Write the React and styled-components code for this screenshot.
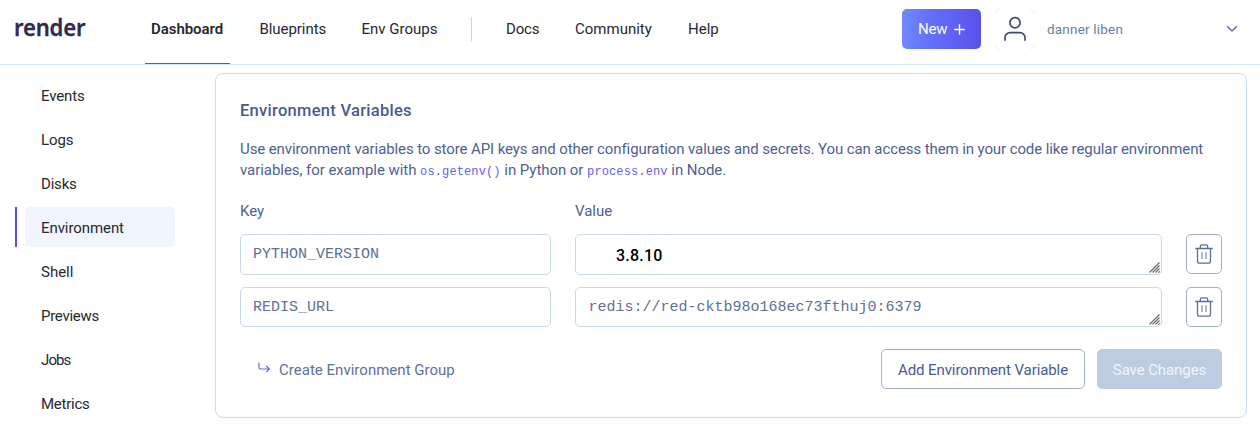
import React from "react";
import styled, { createGlobalStyle } from "styled-components";

const GlobalStyle = createGlobalStyle`
  *, *::before, *::after { box-sizing: border-box; }
  body { margin: 0; background: #fff; overflow: hidden; }
  button, input, textarea { font: inherit; }
  svg { flex-shrink: 0; }
`;

const Page = styled.div`
  height: 433px;
  font-family: Roboto, "Liberation Sans", sans-serif;
  font-size: 15px;
  line-height: 20px;
  color: #27272f;
`;

const Header = styled.header`
  display: flex;
  height: 65px;
  padding: 0 22px 0 14px;
  border-bottom: 1px solid #d7e3fa;
`;

const Logo = styled.a`
  width: 131px;
  padding-top: 10px;
  font-family: "Noto Sans", sans-serif;
  font-size: 24px;
  font-weight: 600;
  line-height: 34px;
  letter-spacing: -0.2px;
  color: #322b4d;
  -webkit-text-stroke: 0.3px #322b4d;
  transform: scaleX(0.92);
  transform-origin: 0 0;
`;

const Nav = styled.nav`
  display: flex;
  align-items: stretch;
  flex: 1;
`;

const NavItem = styled.a`
  width: ${(p) => p.$width}px;
  margin-left: ${(p) => p.$offset || 0}px;
  padding: 19px 0 0 6px;
  font-weight: ${(p) => (p.$active ? 600 : 400)};
  letter-spacing: ${(p) => p.$spacing || 0}px;
  white-space: nowrap;
  border-bottom: 1px solid ${(p) => (p.$active ? "#5850e6" : "transparent")};
`;

const NavDivider = styled.span`
  width: 1px;
  height: 24px;
  margin: 17px 28px 0 0;
  background: #c8d5e8;
`;

const NewButton = styled.button`
  display: flex;
  align-items: center;
  gap: 7px;
  width: 79px;
  height: 40px;
  margin-top: 9px;
  padding: 0 15px 0 16px;
  border: 0;
  border-radius: 5px;
  letter-spacing: -0.25px;
  color: #fff;
  background: linear-gradient(90deg, #7089ff 0%, #6470fa 35%, #5b50e9 100%);
`;

const Account = styled.div`
  display: flex;
  align-items: center;
  width: 243px;
  height: 40px;
  margin: 9px 0 0 14px;
`;

const Avatar = styled.span`
  display: block;
  width: 40px;
  height: 40px;
  margin-right: 12px;
`;

const UserName = styled.span`
  flex: 1;
  font-size: 13.5px;
  letter-spacing: 0.2px;
  color: #6b7aa6;
`;

const Body = styled.div`
  display: flex;
  align-items: flex-start;
`;

const Sidebar = styled.nav`
  display: flex;
  flex-direction: column;
  gap: 4px;
  width: 215px;
  padding: 10px 40px 0 15px;
`;

const SideItem = styled.a`
  display: flex;
  height: 40px;
  padding-left: 8px;
  border-left: 2px solid ${(p) => (p.$active ? "#5b50e9" : "transparent")};
`;

const SideLabel = styled.span`
  flex: 1;
  padding: 11px 16px;
  border-radius: 5px;
  letter-spacing: ${(p) => p.$spacing}px;
  background: ${(p) => (p.$active ? "#f1f5ff" : "transparent")};
`;

const Card = styled.main`
  width: 1032px;
  height: 345px;
  margin-top: 8px;
  padding: 26px 24px 0;
  border: 1px solid #cfdbee;
  border-radius: 8px;
  color: #4f5f91;
`;

const Title = styled.h1`
  margin: 0 0 17px;
  font-size: 16.5px;
  font-weight: 500;
  line-height: 22px;
  letter-spacing: 0.28px;
  color: #4a5b90;
`;

const Description = styled.p`
  margin: 0;
  line-height: 21px;
  white-space: nowrap;
`;

const Line = styled.span`
  display: block;
  height: 21px;
  letter-spacing: ${(p) => p.$spacing || 0}px;
`;

const Code = styled.code`
  font-family: "Liberation Mono", monospace;
  font-size: 12px;
  line-height: 1;
  letter-spacing: 0.12px;
  color: #5f62f4;
`;

const Row = styled.div`
  display: grid;
  grid-template-columns: 311px 587px 36px;
  column-gap: 24px;
  margin-bottom: 12px;
`;

const Labels = styled(Row)`
  margin: 20px 0 13px;
`;

const Field = styled.input`
  width: 100%;
  height: ${(p) => p.$height}px;
  padding: 0 12px;
  border: 1px solid #cbd6ef;
  border-radius: 5px;
  outline: 0;
  background: #fff;
  font-family: "Liberation Mono", monospace;
  font-size: 15px;
  color: #616f9b;
`;

const ValueField = styled.div`
  display: flex;
  align-items: center;
  justify-content: space-between;
  height: ${(p) => p.$height}px;
  padding: 3px 1px 1px ${(p) => (p.$plain ? 40 : 12.5)}px;
  border: 1px solid #cbd6ef;
  border-radius: 5px;
  font-family: ${(p) => (p.$plain ? 'Roboto, sans-serif' : '"Liberation Mono", monospace')};
  font-size: ${(p) => (p.$plain ? 16 : 15)}px;
  font-weight: ${(p) => (p.$plain ? 500 : 400)};
  letter-spacing: ${(p) => (p.$plain ? 0.2 : 0)}px;
  color: ${(p) => (p.$plain ? "#000" : "#616f9b")};
`;

const Grip = styled.svg`
  align-self: flex-end;
`;

const DeleteButton = styled.button`
  display: grid;
  place-items: center;
  width: 36px;
  height: 40px;
  padding: 0;
  border: 1px solid #a4aed2;
  border-radius: 5px;
  background: #fff;
`;

const Actions = styled.div`
  display: flex;
  align-items: center;
  gap: 12px;
  margin-top: 22px;
`;

const GroupLink = styled.a`
  display: flex;
  align-items: center;
  gap: 8px;
  flex: 1;
  padding: 2px 0 0 18px;
  letter-spacing: 0.02px;
  color: #616f9b;
`;

const ActionButton = styled.button`
  width: ${(p) => p.$width}px;
  height: 40px;
  padding: 1px 0 0;
  border: 1px solid ${(p) => (p.$disabled ? "#becce2" : "#a4aed2")};
  border-radius: 5px;
  letter-spacing: -0.09px;
  white-space: nowrap;
  color: ${(p) => (p.$disabled ? "#f1f5fc" : "#4a5b90")};
  background: ${(p) => (p.$disabled ? "#becce2" : "#fff")};
`;

const PlusIcon = () => (
  <svg width="11" height="11" viewBox="0 0 11 11" stroke="#fff" strokeWidth="1.4">
    <path d="M5.5 .2v10.6M.2 5.5h10.6" />
  </svg>
);

const UserIcon = () => (
  <svg width="40" height="40" viewBox="0 0 40 40" fill="none" stroke="#3c4d74" strokeWidth="1.7">
    <path stroke="#e2f7f3" strokeWidth="1" d="M.5 5Q.5.5 5 .5M35 .5q4.5 0 4.5 4.5M39.5 35q0 4.5-4.5 4.5M5 39.5Q.5 39.5.5 35" />
    <circle cx="20" cy="13.7" r="5.1" />
    <path d="M10 31.8v-3.200a5 5 0 0 1 5-5h10a5 5 0 0 1 5 5v3.200" />
  </svg>
);

const ChevronIcon = () => (
  <svg width="12" height="8" viewBox="0 0 12 8" fill="none" stroke="#5f6d9f" strokeWidth="1.5">
    <path d="M1.2 1.3 6 6l4.8-4.7" />
  </svg>
);

const TrashIcon = () => (
  <svg width="18" height="20" viewBox="0 0 18 20" fill="none" stroke="#5e6c9d" strokeWidth="1.3">
    <path d="M.3 4.5h17.4M5.3 4.5V2.6C5.3 1.4 6 .8 7 .8h4c1 0 1.7.6 1.7 1.8v1.9M2.5 4.5v12.8c0 1.1.7 1.9 1.8 1.9h9.4c1.1 0 1.8-.8 1.8-1.9V4.5" />
    <path stroke="#8490b8" d="M7 8.3v6.6M11 8.3v6.6" />
  </svg>
);

const Branch = styled.svg`
  margin-top: -5px;
`;

const BranchIcon = () => (
  <Branch width="13" height="12" viewBox="0 0 13 12" fill="none" stroke="#6268ee" strokeWidth="1.2">
    <path d="M1 .5v4.8c0 1 .6 1.7 1.7 1.7h8.5M8.2 3.8 11.4 7l-3.2 3.2" />
  </Branch>
);

const ResizeGrip = () => (
  <Grip width="11" height="11" viewBox="0 0 11 11" stroke="#666" strokeWidth="1.1">
    <path d="M.5 10.5l10-10M3.5 10.5l7-7M6.5 10.5l4-4M9.3 10.7l1.4-1.4" />
  </Grip>
);

const sideItems = [
  { label: "Events", spacing: -0.15 },
  { label: "Logs", spacing: -0.1 },
  { label: "Disks", spacing: -0.2 },
  { label: "Environment", spacing: -0.08, active: true },
  { label: "Shell", spacing: 0 },
  { label: "Previews", spacing: -0.28 },
  { label: "Jobs", spacing: -0.9 },
  { label: "Metrics", spacing: -0.25 },
];

export default function App() {
  return (
    <Page>
      <GlobalStyle />
      <Header>
        <Logo>render</Logo>
        <Nav>
          <NavItem $active $width={85} $spacing={-0.05}>Dashboard</NavItem>
          <NavItem $width={102} $offset={23.5} $spacing={-0.06}>Blueprints</NavItem>
          <NavItem $width={115.5}>Env Groups</NavItem>
          <NavDivider />
          <NavItem $width={69} $spacing={-0.2}>Docs</NavItem>
          <NavItem $width={113}>Community</NavItem>
          <NavItem $width={60}>Help</NavItem>
        </Nav>
        <NewButton>New <PlusIcon /></NewButton>
        <Account>
          <Avatar><UserIcon /></Avatar>
          <UserName>danner liben</UserName>
          <ChevronIcon />
        </Account>
      </Header>
      <Body>
        <Sidebar>
          {sideItems.map(({ label, spacing, active }) => (
            <SideItem key={label} $active={active}>
              <SideLabel $active={active} $spacing={spacing}>{label}</SideLabel>
            </SideItem>
          ))}
        </Sidebar>
        <Card>
          <Title>Environment Variables</Title>
          <Description>
            <Line $spacing={-0.1}>Use environment variables to store API keys and other configuration values and secrets. You can access them in your code like regular environment</Line>
            <Line $spacing={-0.05}>variables, for example with <Code>os.getenv()</Code> in Python or <Code>process.env</Code> in Node.</Line>
          </Description>
          <Labels><span>Key</span><span>Value</span></Labels>
          <Row>
            <Field $height={41} defaultValue="PYTHON_VERSION" />
            <ValueField $height={41} $plain>3.8.10<ResizeGrip /></ValueField>
            <DeleteButton aria-label="Delete"><TrashIcon /></DeleteButton>
          </Row>
          <Row>
            <Field $height={40} defaultValue="REDIS_URL" />
            <ValueField $height={40}>redis://red-cktb98o168ec73fthuj0:6379<ResizeGrip /></ValueField>
            <DeleteButton aria-label="Delete"><TrashIcon /></DeleteButton>
          </Row>
          <Actions>
            <GroupLink><BranchIcon />Create Environment Group</GroupLink>
            <ActionButton $width={204}>Add Environment Variable</ActionButton>
            <ActionButton $width={125} $disabled>Save Changes</ActionButton>
          </Actions>
        </Card>
      </Body>
    </Page>
  );
}
